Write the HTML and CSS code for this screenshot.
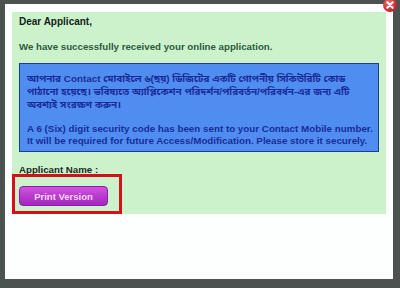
FILE: index.html
```html
<!DOCTYPE html>
<html lang="en">
<head>
<meta charset="utf-8">
<title>Application received</title>
<link rel="stylesheet" href="styles.css">
</head>
<body>
<div class="modal">
  <div class="panel">
    <p class="greet">Dear Applicant,</p>
    <p class="received">We have successfully received your online application.</p>
    <div class="notice">
      <p class="bn">আপনার Contact মোবাইলে ৬(ছয়) ডিজিটের একটি গোপনীয় সিকিউরিটি কোড<br>পাঠানো হয়েছে। ভবিষ্যতে অ্যাপ্লিকেশন পরিদর্শন/পরিবর্তন/পরিবর্ধন-এর জন্য এটি<br>অবশ্যই সংরক্ষণ করুন।</p>
      <p class="en">A 6 (Six) digit security code has been sent to your Contact Mobile number.<br>It will be required for future Access/Modification. Please store it securely.</p>
    </div>
    <p class="name">Applicant Name :</p>
    <button class="print">Print Version</button>
    <div class="highlight"></div>
  </div>
  <div class="close">
    <svg viewBox="0 0 14 14" width="14" height="14"><path d="M4.3 4.3 9.7 9.7M9.7 4.3 4.3 9.7" stroke="#fff" stroke-width="2" stroke-linecap="round"/></svg>
  </div>
</div>
</body>
</html>
```

FILE: styles.css
```css
html, body {
  margin: 0;
  padding: 0;
}
body {
  width: 400px;
  height: 288px;
  background: #4c5250;
  font-family: "Liberation Sans", Arial, "Noto Sans Bengali", "Lohit Bengali", sans-serif;
  overflow: hidden;
}
.modal {
  position: relative;
  box-sizing: border-box;
  margin: 4px 7px 0 5px;
  width: 388px;
  height: 275px;
  background: #fdfefe;
  padding: 8px 7px;
}
.panel {
  position: relative;
  box-sizing: border-box;
  height: 202px;
  background: #cbf2cb;
  padding: 0 7px;
}
.panel p {
  margin: 0;
}
.greet {
  padding-top: 3px;
  font-size: 10px;
  line-height: 14px;
  font-weight: bold;
  color: #14231a;
}
.received {
  margin-top: 11px !important;
  font-size: 9.7px;
  line-height: 14px;
  font-weight: bold;
  color: #2e5a3c;
}
.notice {
  margin-top: 9px;
  box-sizing: border-box;
  width: 360px;
  height: 89px;
  background: #4f8ef0;
  border: 1.5px solid #243a8c;
  padding: 8px 4px 0 7px;
  color: #1b2c9a;
  font-weight: bold;
  white-space: nowrap;
}
.bn {
  font-size: 9.9px;
  line-height: 13px;
}
.en {
  margin-top: 11.5px !important;
  font-size: 9.8px;
  line-height: 12px;
}
.name {
  margin-top: 11px !important;
  font-size: 9.7px;
  line-height: 14px;
  font-weight: bold;
  color: #1d2a24;
}
.print {
  display: block;
  margin-top: 9px;
  width: 89px;
  height: 20px;
  border: 1px solid #8b1ea3;
  border-radius: 4px;
  background: linear-gradient(#d052de, #a326bd);
  color: #f6d8f8;
  font-family: "Liberation Sans", Arial, sans-serif;
  font-size: 9.5px;
  font-weight: bold;
  padding: 0;
}
.highlight {
  position: absolute;
  left: 0;
  top: 162px;
  width: 110px;
  height: 40px;
  box-sizing: border-box;
  border: 3px solid #d4101c;
}
.close {
  position: absolute;
  right: -4px;
  top: -6px;
  width: 14px;
  height: 14px;
  border-radius: 50%;
  background: radial-gradient(circle at 40% 35%, #f07070, #c81e28 70%);
  display: flex;
  align-items: center;
  justify-content: center;
}
.close svg {
  display: block;
}
```
